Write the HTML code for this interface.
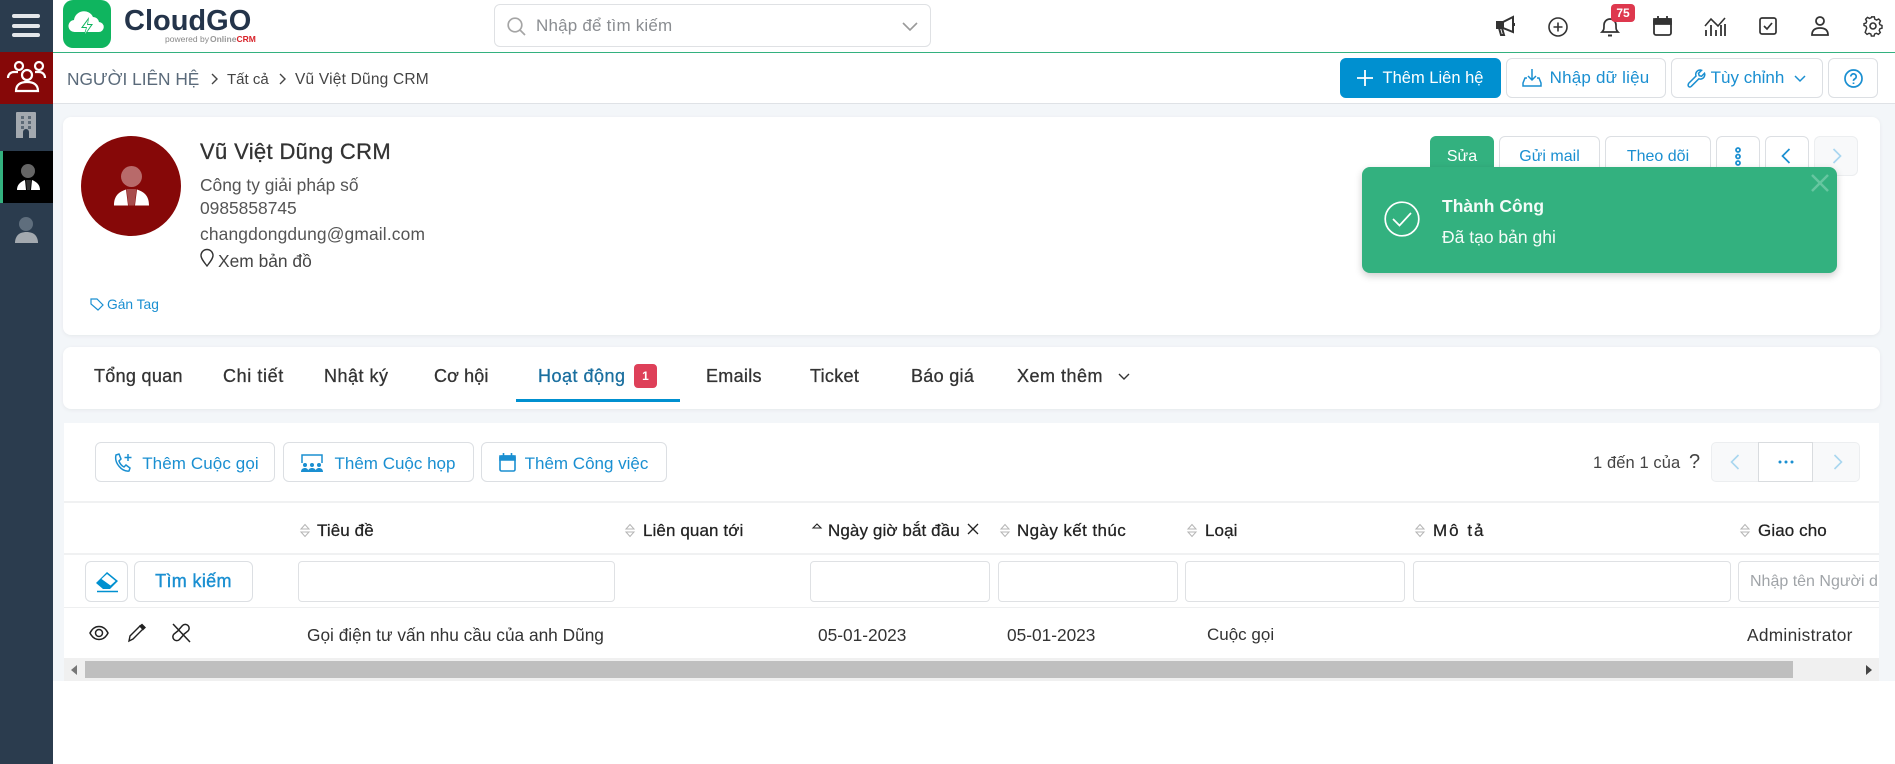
<!DOCTYPE html>
<html lang="vi">
<head>
<meta charset="utf-8">
<title>CloudGO</title>
<style>
*{box-sizing:border-box}
html,body{margin:0;padding:0;width:1895px;height:764px;overflow:hidden;background:#fff;font-family:"Liberation Sans","DejaVu Sans",sans-serif;color:#333}
.a{position:absolute}
.t{position:absolute;white-space:nowrap;line-height:24px;height:24px}
.btn{position:absolute;background:#fff;border:1px solid #dcdfe3;border-radius:6px;color:#1a8fd1;font-size:16px;white-space:nowrap;display:flex;align-items:center;justify-content:center;padding-top:2px}
.card{position:absolute;background:#fff;border-radius:8px;box-shadow:0 1px 4px rgba(0,0,0,.06)}
.inp{position:absolute;top:561px;height:41px;background:#fff;border:1px solid #dfe1e4;border-radius:4px}
.th{position:absolute;top:519px;white-space:nowrap;line-height:24px;font-size:17px;letter-spacing:.1px;color:#222;-webkit-text-stroke:.25px #222}
.td{position:absolute;top:623px;white-space:nowrap;line-height:24px;font-size:17.300px;color:#333}
.tab{position:absolute;top:364px;white-space:nowrap;line-height:24px;font-size:18px;letter-spacing:.3px;color:#333;-webkit-text-stroke:.3px #333}
.info{font-size:17.400px;color:#555}
svg{position:absolute;overflow:visible}
</style>
</head>
<body>
<!-- page background -->
<div class="a" style="left:53px;top:104px;width:1842px;height:577px;background:#f3f6f9"></div>

<!-- sidebar -->
<div class="a" style="left:0;top:0;width:53px;height:764px;background:#2b3c4e"></div>
<div class="a" style="left:12px;top:14px;width:28px;height:4px;border-radius:2px;background:#e4e7ea"></div>
<div class="a" style="left:12px;top:24px;width:28px;height:4px;border-radius:2px;background:#e4e7ea"></div>
<div class="a" style="left:12px;top:33px;width:28px;height:4px;border-radius:2px;background:#e4e7ea"></div>
<div class="a" style="left:0;top:52px;width:53px;height:52px;background:#860808"></div>
<svg style="left:7px;top:60px" width="39" height="34" viewBox="0 0 39 34" fill="none" stroke="#fff" stroke-width="2.200">
  <circle cx="12" cy="6" r="4"/><circle cx="32" cy="6" r="4"/><circle cx="20" cy="15" r="5"/>
  <path d="M1 18c0-4 3-6 6-6h4M38 18c0-4-3-6-6-6h-4"/>
  <path d="M9 31c0-6 4-9 11-9s11 3 11 9z"/>
</svg>
<svg style="left:16px;top:112px" width="20" height="26" viewBox="0 0 20 26">
  <path d="M1 0h18a1 1 0 0 1 1 1v25h-7v-6a3 3 0 0 0-6 0v6H0V1a1 1 0 0 1 1-1z" fill="#a3a9af"/>
  <g fill="#5d6a76"><rect x="5" y="4" width="3" height="3"/><rect x="12" y="4" width="3" height="3"/><rect x="5" y="9" width="3" height="3"/><rect x="12" y="9" width="3" height="3"/><rect x="5" y="14" width="3" height="3"/><rect x="12" y="14" width="3" height="3"/></g>
</svg>
<div class="a" style="left:0;top:151px;width:53px;height:52px;background:#000"></div>
<div class="a" style="left:0;top:151px;width:3px;height:52px;background:#33b17f"></div>
<div class="a" style="left:21px;top:164px;width:14px;height:14px;border-radius:50%;background:#666"></div>
<svg style="left:17px;top:179px" width="23" height="11" viewBox="0 0 23 11"><path d="M0 11c0-5 3-8 8-10l1 10zM23 11c0-5-3-8-8-10l-1 10z" fill="#fff"/><path d="M9 1h5l-1 10h-3z" fill="#333"/></svg>
<div class="a" style="left:19px;top:217px;width:14px;height:14px;border-radius:50%;background:#5f6e7d"></div>
<svg style="left:15px;top:232px" width="23" height="11" viewBox="0 0 23 11"><path d="M0 11c0-1 0-4 2-7 2-3 6-4 9.500-4s7.500 1 9.500 4c2 3 2 6 2 7z" fill="#a3a9af"/></svg>

<!-- header -->
<div class="a" style="left:53px;top:52px;width:1842px;height:1px;background:#33b17f"></div>
<div class="a" style="left:53px;top:103px;width:1842px;height:1px;background:#dfe2e6"></div>
<div class="a" style="left:63px;top:0;width:48px;height:48px;background:#0fb55f;border-radius:10px"></div>
<svg style="left:68px;top:9px" width="38" height="30" viewBox="0 0 38 30">
  <path d="M7 23a6 6 0 0 1-1-12 10 10 0 0 1 19-3 6 6 0 0 1 6 5 5 5 0 0 1-.5 10z" fill="#fff"/>
  <path d="M21 8l-8 11h5l-3 10 10-14h-5z" fill="#0fb55f"/>
  <path d="M20 11l-5 7h4l-2 7 6-9h-4z" fill="#fff"/>
</svg>
<div class="t" style="left:124px;top:5px;height:32px;line-height:32px;font-size:29px;font-weight:bold;color:#24344a">CloudGO</div>
<div class="t" style="left:165px;top:33px;height:12px;line-height:12px;font-size:8.500px;color:#888">powered by</div>
<div class="t" style="left:210px;top:33px;height:12px;line-height:12px;font-size:8.500px;color:#999;font-weight:bold">Online<span style="color:#d8232a">CRM</span></div>

<!-- search -->
<div class="a" style="left:494px;top:4px;width:437px;height:43px;border:1px solid #dfe1e4;border-radius:6px;background:#fff"></div>
<svg style="left:507px;top:17px" width="19" height="19" viewBox="0 0 19 19" fill="none" stroke="#a5a5a5" stroke-width="1.700"><circle cx="8" cy="8" r="6.800"/><path d="M13 13l5 5"/></svg>
<div class="t" style="left:536px;top:14px;font-size:17px;letter-spacing:.2px;color:#8a8d91">Nhập để tìm kiếm</div>
<svg style="left:902px;top:22px" width="16" height="9" viewBox="0 0 16 9" fill="none" stroke="#9a9a9a" stroke-width="1.600"><path d="M1 1l7 7 7-7"/></svg>

<!-- top icons -->
<svg style="left:1495px;top:16px" width="21" height="21" viewBox="0 0 21 21" fill="none" stroke="#333" stroke-width="2">
  <path d="M18 1v15L8 12H2V6h6z" fill="#fff"/><path d="M2 6h6v6H2z" fill="#333"/><path d="M4 12l2 7h3l-2-7"/><path d="M19 7v3"/>
</svg>
<svg style="left:1548px;top:17px" width="20" height="20" viewBox="0 0 20 20" fill="none" stroke="#333" stroke-width="1.600"><circle cx="10" cy="10" r="9"/><path d="M10 5.500v9M5.500 10h9"/></svg>
<svg style="left:1601px;top:16px" width="18" height="21" viewBox="0 0 18 21" fill="none" stroke="#333" stroke-width="1.700"><path d="M1 16c2-2 2-3 2-7a6 6 0 0 1 12 0c0 4 0 5 2 7z"/><path d="M7 19.500h4" stroke-width="2"/></svg>
<div class="a" style="left:1611px;top:4px;width:24px;height:18px;background:#de384e;border-radius:4px;color:#fff;font-size:12px;font-weight:bold;text-align:center;line-height:18px">75</div>
<svg style="left:1653px;top:16px" width="19" height="20" viewBox="0 0 19 20" fill="none" stroke="#333" stroke-width="1.800"><rect x="1" y="3" width="17" height="16" rx="2"/><path d="M1 3h17v5H1z" fill="#333"/><path d="M5 0v3M14 0v3"/></svg>
<svg style="left:1704px;top:16px" width="22" height="21" viewBox="0 0 22 21" fill="none" stroke="#333" stroke-width="1.600"><path d="M1 10l6-7 7 7 7-8"/><path d="M2 14v6M7 9v11M12 14v6M17 9v11M21 8v12" stroke-width="1.800"/></svg>
<svg style="left:1759px;top:17px" width="18" height="18" viewBox="0 0 18 18" fill="none" stroke="#333" stroke-width="1.700"><rect x="1" y="1" width="16" height="16" rx="2"/><path d="M5 9l3 3 5-6"/></svg>
<svg style="left:1811px;top:16px" width="18" height="20" viewBox="0 0 18 20" fill="none" stroke="#333" stroke-width="1.800"><circle cx="9" cy="5" r="4"/><path d="M1 19c0-5 3-7 8-7s8 2 8 7z"/></svg>
<svg style="left:1863px;top:16px" width="20" height="20" viewBox="0 0 20 20" fill="none" stroke="#333" stroke-width="1.600"><circle cx="10" cy="10" r="3"/><path d="M8.500 1h3l.5 2.500 2 1 2.300-1.200 2 2.200L17 7.800l.7 1.900 2.300.8v3l-2.300.6-.8 2 1.200 2.200-2.100 2.100-2.200-1.200-2 .8-.6 2.300h-3l-.6-2.300-2-.8-2.200 1.200-2.100-2.100L3 13.300l-.8-2L0 10.500v-2l2.300-.7.7-2-1.200-2.200 2-2.100L6.200 2.700l2-.9z" transform="translate(1 0) scale(.9)"/></svg>

<!-- breadcrumb -->
<div class="t" style="left:67px;top:67px;font-size:17.300px;color:#5a6a7a">NGƯỜI LIÊN HỆ</div>
<svg style="left:211px;top:73px" width="8" height="12" viewBox="0 0 8 12" fill="none" stroke="#444" stroke-width="1.400"><path d="M1 1l5 5-5 5"/></svg>
<div class="t" style="left:227px;top:68px;font-size:15px;color:#444">Tất cả</div>
<svg style="left:279px;top:73px" width="8" height="12" viewBox="0 0 8 12" fill="none" stroke="#444" stroke-width="1.400"><path d="M1 1l5 5-5 5"/></svg>
<div class="t" style="left:295px;top:68px;font-size:15.500px;letter-spacing:.2px;color:#444">Vũ Việt Dũng CRM</div>

<div class="btn" style="left:1340px;top:58px;width:161px;height:40px;background:#0090d0;border-color:#0090d0;color:#fff;font-size:16.500px;padding-top:0">
  <svg style="left:16px;top:11px" width="16" height="16" viewBox="0 0 16 16" stroke="#fff" stroke-width="1.800"><path d="M8 0v16M0 8h16"/></svg>
  <span style="margin-left:25px">Thêm Liên hệ</span></div>
<div class="btn" style="left:1506px;top:58px;width:160px;height:40px;font-size:17px;letter-spacing:.2px;padding-top:0">
  <svg style="left:15px;top:10px" width="20" height="18" viewBox="0 0 20 18" fill="none" stroke="#1a8fd1" stroke-width="1.500"><path d="M10 0v10M6 7l4 4 4-4"/><path d="M5 9H3l-2 5v3h18v-3l-2-5h-2"/></svg>
  <span style="margin-left:27px">Nhập dữ liệu</span></div>
<div class="btn" style="left:1671px;top:58px;width:152px;height:40px;font-size:17px;padding-top:0">
  <svg style="left:15px;top:10px" width="19" height="19" viewBox="0 0 19 19" fill="none" stroke="#1a8fd1" stroke-width="1.500"><path d="M1.500 14.500L9 7c-1-3 1-6 4.500-6l1 .3-3 3 .7 2.300 2.300.7 3-3 .3 1c0 3.500-3 5.500-6 4.500l-7.500 7.500a1.500 1.500 0 0 1-2.800-2.300z"/></svg>
  <span style="margin-left:1px">Tùy chỉnh</span>
  <svg style="left:122px;top:16px" width="12" height="7" viewBox="0 0 12 7" fill="none" stroke="#1a8fd1" stroke-width="1.500"><path d="M1 1l5 5 5-5"/></svg></div>
<div class="btn" style="left:1828px;top:58px;width:50px;height:40px">
  <svg style="left:15px;top:10px" width="19" height="19" viewBox="0 0 19 19" fill="none" stroke="#1a8fd1" stroke-width="1.700"><circle cx="9.500" cy="9.500" r="8.500"/><path d="M6.800 7.500a2.700 2.700 0 1 1 4 2.400c-.9.500-1.300 1-1.300 2"/><path d="M9.500 13.500v1.500"/></svg></div>

<!-- profile card -->
<div class="card" style="left:63px;top:117px;width:1817px;height:218px"></div>
<div class="a" style="left:81px;top:136px;width:100px;height:100px;border-radius:50%;background:#860808"></div>
<div class="a" style="left:121px;top:166px;width:21px;height:21px;border-radius:50%;background:#b86a6a"></div>
<svg style="left:114px;top:188px" width="35" height="18" viewBox="0 0 35 18"><path d="M0 17.500c0-8 3-13 12-16l2 16zM35 17.500c0-8-3-13-12-16l-2 16z" fill="#fff"/><path d="M12.500 1h10l-2 16.500h-6z" fill="#a84c4c"/></svg>
<div class="t" style="left:200px;top:140px;font-size:22px;letter-spacing:.35px;color:#333;-webkit-text-stroke:.3px #333">Vũ Việt Dũng CRM</div>
<div class="t info" style="left:200px;top:173px">Công ty giải pháp số</div>
<div class="t info" style="left:200px;top:196px">0985858745</div>
<div class="t info" style="left:200px;top:222px;letter-spacing:.15px">changdongdung@gmail.com</div>
<svg style="left:200px;top:249px" width="14" height="18" viewBox="0 0 14 18" fill="none" stroke="#333" stroke-width="1.400"><path d="M7 17C4 13 1 9.500 1 6.500a6 6 0 0 1 12 0C13 9.500 10 13 7 17z"/></svg>
<div class="t" style="left:218px;top:249px;font-size:17.400px;color:#444">Xem bản đồ</div>
<svg style="left:90px;top:298px" width="14" height="13" viewBox="0 0 14 13" fill="none" stroke="#1a8fd1" stroke-width="1.200"><path d="M1 1h6l6 6-5 5-7-6z"/></svg>
<div class="t" style="left:107px;top:293px;font-size:13.800px;color:#1a8fd1">Gán Tag</div>

<div class="btn" style="left:1430px;top:136px;width:64px;height:40px;background:#33b17f;border-color:#33b17f;color:#fff">Sửa</div>
<div class="btn" style="left:1499px;top:136px;width:101px;height:40px">Gửi mail</div>
<div class="btn" style="left:1605px;top:136px;width:106px;height:40px">Theo dõi</div>
<div class="btn" style="left:1716px;top:136px;width:44px;height:40px">
  <svg style="left:17px;top:10px" width="8" height="19" viewBox="0 0 8 19" fill="none" stroke="#1a8fd1" stroke-width="1.800"><circle cx="4" cy="3" r="2"/><circle cx="4" cy="9.500" r="2"/><circle cx="4" cy="16" r="2"/></svg></div>
<div class="btn" style="left:1765px;top:136px;width:44px;height:40px">
  <svg style="left:15px;top:11px" width="10" height="16" viewBox="0 0 10 16" fill="none" stroke="#1a8fd1" stroke-width="1.700"><path d="M8.500 1l-7 7 7 7"/></svg></div>
<div class="btn" style="left:1814px;top:136px;width:44px;height:40px;background:#f8f9fa;border-color:#eceef0">
  <svg style="left:17px;top:11px" width="10" height="16" viewBox="0 0 10 16" fill="none" stroke="#a9d6ef" stroke-width="1.700"><path d="M1.500 1l7 7-7 7"/></svg></div>

<!-- toast -->
<div class="a" style="left:1362px;top:167px;width:475px;height:106px;background:#33b17f;border-radius:8px;box-shadow:0 3px 8px rgba(0,0,0,.2)"></div>
<svg style="left:1384px;top:201px" width="36" height="36" viewBox="0 0 36 36" fill="none" stroke="#fff" stroke-width="1.700"><circle cx="18" cy="18" r="16.800"/><path d="M9 18l6.500 6.500L27 12"/></svg>
<div class="t" style="left:1442px;top:194px;font-size:17.500px;font-weight:bold;color:#f4fbf8">Thành Công</div>
<div class="t" style="left:1442px;top:225px;font-size:17.500px;color:#f4fbf8">Đã tạo bản ghi</div>
<svg style="left:1811px;top:174px" width="18" height="18" viewBox="0 0 18 18" stroke="#66c6a0" stroke-width="2.500"><path d="M1 1l16 16M17 1L1 17"/></svg>

<!-- tabs -->
<div class="card" style="left:63px;top:347px;width:1817px;height:62px"></div>
<div class="tab" style="left:94px">Tổng quan</div>
<div class="tab" style="left:223px;letter-spacing:.6px">Chi tiết</div>
<div class="tab" style="left:324px;letter-spacing:.5px">Nhật ký</div>
<div class="tab" style="left:434px;letter-spacing:.1px">Cơ hội</div>
<div class="tab" style="left:538px;letter-spacing:.5px;color:#1a6f9f;-webkit-text-stroke:.3px #1a6f9f">Hoạt động</div>
<div class="a" style="left:634px;top:364px;width:23px;height:24px;background:#de4059;border-radius:4px;color:#fff;font-size:12px;font-weight:bold;text-align:center;line-height:24px">1</div>
<div class="a" style="left:516px;top:399px;width:164px;height:3px;background:#0090d0"></div>
<div class="tab" style="left:706px">Emails</div>
<div class="tab" style="left:810px">Ticket</div>
<div class="tab" style="left:911px">Báo giá</div>
<div class="tab" style="left:1017px;letter-spacing:.5px">Xem thêm</div>
<svg style="left:1118px;top:373px" width="12" height="7" viewBox="0 0 12 7" fill="none" stroke="#333" stroke-width="1.400"><path d="M1 1l5 5 5-5"/></svg>

<!-- table card -->
<div class="a" style="left:64px;top:423px;width:1815px;height:258px;background:#fff"></div>

<div class="btn" style="left:95px;top:442px;width:180px;height:40px;font-size:17px;letter-spacing:.1px;padding-top:4px">
  <svg style="left:17px;top:10px" width="19" height="20" viewBox="0 0 19 20" fill="none" stroke="#1a8fd1" stroke-width="1.500"><path d="M3 2l3-1 2 5-2 2c1 3 3 5 5 6l2-2 4 3-1 3c-7 1-15-8-13-16z"/><path d="M15 1v7M11.500 4.500h7"/></svg>
  <span style="margin-left:31px">Thêm Cuộc gọi</span></div>
<div class="btn" style="left:283px;top:442px;width:191px;height:40px;font-size:17px;padding-top:4px">
  <svg style="left:17px;top:11px" width="22" height="18" viewBox="0 0 22 18" fill="none" stroke="#1a8fd1" stroke-width="1.500"><path d="M1 9V1h20v8"/><g fill="#1a8fd1" stroke="none"><circle cx="4" cy="11" r="2"/><circle cx="11" cy="11" r="2"/><circle cx="18" cy="11" r="2"/><path d="M0 18c0-3 2-4 4-4s3 1 4 4zM7 18c0-3 2-4 4-4s4 1 4 4zM14 18c1-3 2-4 4-4s4 1 4 4z"/></g></svg>
  <span style="margin-left:33px">Thêm Cuộc họp</span></div>
<div class="btn" style="left:481px;top:442px;width:186px;height:40px;font-size:17px;padding-top:4px">
  <svg style="left:17px;top:10px" width="17" height="19" viewBox="0 0 17 19" fill="none" stroke="#1a8fd1" stroke-width="1.600"><rect x="1" y="3" width="15" height="15" rx="1.500"/><path d="M1 3h15v4H1z" fill="#1a8fd1"/><path d="M4.500 0v3M12.500 0v3"/></svg>
  <span style="margin-left:25px">Thêm Công việc</span></div>

<div class="t" style="left:1593px;top:451px;font-size:16.500px;letter-spacing:.1px;color:#444">1 đến 1 của</div>
<div class="t" style="left:1689px;top:450px;font-size:20px;color:#444">?</div>
<div class="a" style="left:1711px;top:442px;width:149px;height:40px;background:#f8f9fa;border:1px solid #eceef0;border-radius:5px"></div>
<div class="a" style="left:1758px;top:442px;width:55px;height:40px;background:#fff;border:1px solid #d9dcdf"></div>
<svg style="left:1730px;top:454px" width="10" height="16" viewBox="0 0 10 16" fill="none" stroke="#a9d6ef" stroke-width="1.600"><path d="M8.500 1l-7 7 7 7"/></svg>
<svg style="left:1833px;top:454px" width="10" height="16" viewBox="0 0 10 16" fill="none" stroke="#a9d6ef" stroke-width="1.600"><path d="M1.500 1l7 7-7 7"/></svg>
<svg style="left:1778px;top:460px" width="16" height="4" viewBox="0 0 16 4" fill="#1a8fd1"><circle cx="2" cy="2" r="1.500"/><circle cx="8" cy="2" r="1.500"/><circle cx="14" cy="2" r="1.500"/></svg>

<div class="a" style="left:64px;top:501px;width:1815px;height:2px;background:#f0f1f2"></div>
<div class="a" style="left:64px;top:553px;width:1815px;height:2px;background:#f0f1f2"></div>
<div class="a" style="left:64px;top:607px;width:1815px;height:1px;background:#eeeff0"></div>

<!-- sort icons -->
<svg style="left:300px;top:523px" width="10" height="15" viewBox="0 0 10 15" fill="none" stroke="#b5b5b5" stroke-width="1"><path d="M1 6l4-4.500L9 6zM1 9l4 4.500L9 9z"/></svg>
<svg style="left:625px;top:523px" width="10" height="15" viewBox="0 0 10 15" fill="none" stroke="#b5b5b5" stroke-width="1"><path d="M1 6l4-4.500L9 6zM1 9l4 4.500L9 9z"/></svg>
<svg style="left:812px;top:523px" width="10" height="6" viewBox="0 0 10 6" fill="none" stroke="#222" stroke-width="1.100"><path d="M1 5l4-4 4 4z"/></svg>
<svg style="left:1000px;top:523px" width="10" height="15" viewBox="0 0 10 15" fill="none" stroke="#b5b5b5" stroke-width="1"><path d="M1 6l4-4.500L9 6zM1 9l4 4.500L9 9z"/></svg>
<svg style="left:1187px;top:523px" width="10" height="15" viewBox="0 0 10 15" fill="none" stroke="#b5b5b5" stroke-width="1"><path d="M1 6l4-4.500L9 6zM1 9l4 4.500L9 9z"/></svg>
<svg style="left:1415px;top:523px" width="10" height="15" viewBox="0 0 10 15" fill="none" stroke="#b5b5b5" stroke-width="1"><path d="M1 6l4-4.500L9 6zM1 9l4 4.500L9 9z"/></svg>
<svg style="left:1740px;top:523px" width="10" height="15" viewBox="0 0 10 15" fill="none" stroke="#b5b5b5" stroke-width="1"><path d="M1 6l4-4.500L9 6zM1 9l4 4.500L9 9z"/></svg>

<div class="th" style="left:317px">Tiêu đề</div>
<div class="th" style="left:643px">Liên quan tới</div>
<div class="th" style="left:828px">Ngày giờ bắt đầu</div>
<svg style="left:967px;top:523px" width="12" height="12" viewBox="0 0 12 12" stroke="#222" stroke-width="1.300"><path d="M1 1l10 10M11 1L1 11"/></svg>
<div class="th" style="left:1017px;letter-spacing:.4px">Ngày kết thúc</div>
<div class="th" style="left:1205px">Loại</div>
<div class="th" style="left:1433px;letter-spacing:2px">Mô tả</div>
<div class="th" style="left:1758px">Giao cho</div>

<!-- filter row -->
<div class="btn" style="left:85px;top:561px;width:43px;height:41px">
  <svg style="left:9px;top:9px" width="24" height="22" viewBox="0 0 24 22"><path d="M12 1L23 10l-8 8H8L1 12z" fill="#0090d0"/><path d="M12 3l8.500 7-5 4.500L6.500 8z" fill="#fff"/><path d="M2 20.500h21" stroke="#0090d0" stroke-width="1.500"/></svg></div>
<div class="btn" style="left:134px;top:561px;width:119px;height:41px;-webkit-text-stroke:.4px #1a8fd1;font-size:18px;letter-spacing:.35px;padding-top:0">Tìm kiếm</div>
<div class="inp" style="left:298px;width:317px"></div>
<div class="inp" style="left:810px;width:180px"></div>
<div class="inp" style="left:998px;width:180px"></div>
<div class="inp" style="left:1185px;width:220px"></div>
<div class="inp" style="left:1413px;width:318px"></div>
<div class="a" style="left:1738px;top:561px;width:141px;height:41px;background:#fff;border:1px solid #dfe1e4;border-right:0;border-radius:4px 0 0 4px;overflow:hidden;white-space:nowrap;font-size:16px;color:#a0a4a8;line-height:39px;padding-left:11px">Nhập tên Người dùng</div>

<!-- data row -->
<svg style="left:89px;top:625px" width="20" height="16" viewBox="0 0 20 16" fill="none" stroke="#222" stroke-width="1.500"><path d="M1 8c2-4 5-6.500 9-6.500s7 2.500 9 6.500c-2 4-5 6.500-9 6.500S3 12 1 8z"/><circle cx="10" cy="8" r="3.500"/></svg>
<svg style="left:128px;top:624px" width="18" height="18" viewBox="0 0 18 18" fill="none" stroke="#222" stroke-width="1.400"><path d="M1 17l1-5L12 2l3 3L5 15z"/><path d="M12 2l2-1.500 3 3-2 2z" fill="#222"/></svg>
<svg style="left:169px;top:623px" width="24" height="20" viewBox="0 0 24 20" fill="none" stroke="#222" stroke-width="1.500"><path d="M10 7L5 11a3.800 3.800 0 0 0 5.500 5.500l3.500-4"/><path d="M14 12l5-4a3.800 3.800 0 0 0-5.500-5.500L10 6.500"/><path d="M4 1l17 18"/></svg>

<div class="td" style="left:307px">Gọi điện tư vấn nhu cầu của anh Dũng</div>
<div class="td" style="left:818px">05-01-2023</div>
<div class="td" style="left:1007px">05-01-2023</div>
<div class="td" style="left:1207px;font-size:17px">Cuộc gọi</div>
<div class="td" style="left:1747px;letter-spacing:.3px">Administrator</div>

<!-- scrollbar -->
<div class="a" style="left:64px;top:658px;width:1815px;height:23px;background:#f0f0f0"></div>
<div class="a" style="left:85px;top:661px;width:1708px;height:17px;background:#bfbfbf"></div>
<svg style="left:71px;top:665px" width="6" height="10" viewBox="0 0 6 10" fill="#777"><path d="M6 0v10L0 5z"/></svg>
<svg style="left:1866px;top:665px" width="6" height="10" viewBox="0 0 6 10" fill="#444"><path d="M0 0v10l6-5z"/></svg>
</body>
</html>
